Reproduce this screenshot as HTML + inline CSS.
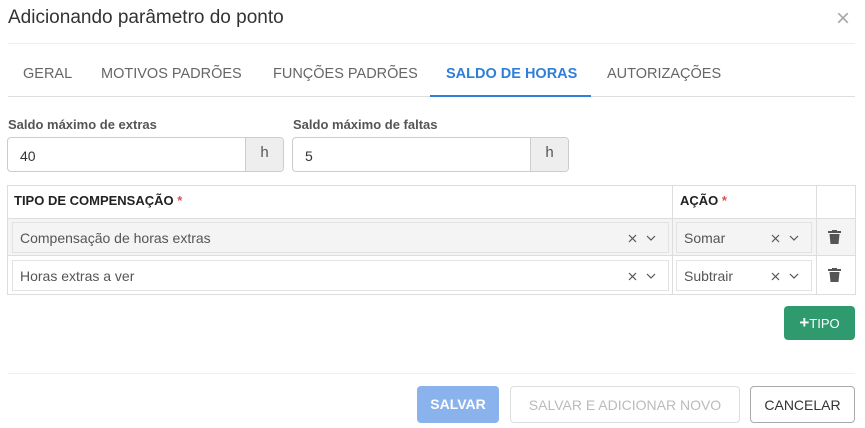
<html><head><style>
body{margin:0;width:865px;height:428px;background:#fff;font-family:"Liberation Sans",sans-serif;color:#333;position:relative;overflow:hidden}
.a{position:absolute}
.tab{position:absolute;top:66px;font-size:14.5px;color:#666}
.lbl{position:absolute;top:117px;font-size:13px;font-weight:bold;color:#555}
.inp{position:absolute;top:137px;height:35px;border:1px solid #ccc;border-radius:4px;box-sizing:border-box;overflow:hidden;font-size:14px}
.inp span{position:absolute;left:12px;top:10px}
.inp .ad{position:absolute;right:0;top:0;bottom:0;width:37px;background:#eee;border-left:1px solid #ccc;text-align:center;line-height:30px;color:#555;font-size:15px}
.sel{position:absolute;height:31px;box-sizing:border-box;border:1px solid #e3e3e3;font-size:14px;color:#555}
.sel span{position:absolute;left:7px;top:7px}
.sel svg{position:absolute;top:11px}
.btn{position:absolute;top:386px;height:37px;box-sizing:border-box;border-radius:4px;font-size:14px;text-align:center;line-height:36px}
</style></head><body>
<div class="a" style="left:8px;top:7px;font-size:19px;color:#333">Adicionando parâmetro do ponto</div>
<div class="a" style="left:836px;top:5px;font-size:24px;color:#aaa">×</div>
<div class="a" style="left:8px;top:43px;width:847px;border-top:1px solid #eee"></div>
<div class="a" style="left:8px;top:96px;width:847px;border-top:1px solid #ddd"></div>
<div class="tab" style="left:23px">GERAL</div>
<div class="tab" style="left:101px">MOTIVOS PADRÕES</div>
<div class="tab" style="left:273px">FUNÇÕES PADRÕES</div>
<div class="tab" style="left:446px;color:#2f7fd8;font-weight:bold">SALDO DE HORAS</div>
<div class="tab" style="left:607px">AUTORIZAÇÕES</div>
<div class="a" style="left:430px;top:95px;width:161px;height:2px;background:#2f7fd8"></div>
<div class="lbl" style="left:8px">Saldo máximo de extras</div>
<div class="lbl" style="left:293px">Saldo máximo de faltas</div>
<div class="inp" style="left:7px;width:277px"><span>40</span><div class="ad">h</div></div>
<div class="inp" style="left:292px;width:277px"><span>5</span><div class="ad">h</div></div>
<div class="a" style="left:7px;top:185px;width:849px;height:110px;border:1px solid #ddd;box-sizing:border-box"></div>
<div class="a" style="left:8px;top:218px;width:847px;height:38px;background:#f4f4f4;border-top:1px solid #ddd;border-bottom:1px solid #ddd;box-sizing:border-box"></div>
<div class="a" style="left:672px;top:185px;height:110px;border-left:1px solid #ddd"></div>
<div class="a" style="left:816px;top:185px;height:110px;border-left:1px solid #ddd"></div>
<div class="a" style="left:14px;top:193px;font-size:13px;font-weight:bold;color:#222">TIPO DE COMPENSAÇÃO <span style="color:#d9534f">*</span></div>
<div class="a" style="left:680px;top:193px;font-size:13px;font-weight:bold;color:#222">AÇÃO <span style="color:#d9534f">*</span></div>

<div class="sel" style="left:12px;top:222px;width:657px"><span>Compensação de horas extras</span>
<svg style="right:31px" width="9" height="9"><path d="M1 1l7 7M8 1l-7 7" stroke="#555" stroke-width="1.2"/></svg>
<svg style="right:12px;top:12px" width="10" height="7"><path d="M1 1l4 4 4-4" stroke="#555" stroke-width="1.2" fill="none"/></svg></div>
<div class="sel" style="left:676px;top:222px;width:136px"><span>Somar</span>
<svg style="right:31px" width="9" height="9"><path d="M1 1l7 7M8 1l-7 7" stroke="#555" stroke-width="1.2"/></svg>
<svg style="right:12px;top:12px" width="10" height="7"><path d="M1 1l4 4 4-4" stroke="#555" stroke-width="1.2" fill="none"/></svg></div>
<div class="sel" style="left:12px;top:260px;width:657px;background:#fff"><span>Horas extras a ver</span>
<svg style="right:31px" width="9" height="9"><path d="M1 1l7 7M8 1l-7 7" stroke="#555" stroke-width="1.2"/></svg>
<svg style="right:12px;top:12px" width="10" height="7"><path d="M1 1l4 4 4-4" stroke="#555" stroke-width="1.2" fill="none"/></svg></div>
<div class="sel" style="left:676px;top:260px;width:136px;background:#fff"><span>Subtrair</span>
<svg style="right:31px" width="9" height="9"><path d="M1 1l7 7M8 1l-7 7" stroke="#555" stroke-width="1.2"/></svg>
<svg style="right:12px;top:12px" width="10" height="7"><path d="M1 1l4 4 4-4" stroke="#555" stroke-width="1.2" fill="none"/></svg></div>

<svg class="a" style="left:828px;top:230px" width="13" height="14" viewBox="0 0 13 14"><rect x="0" y="1" width="13" height="2" fill="#555"/><rect x="4" y="0" width="5" height="2" fill="#555"/><path d="M1.5 4h10l-1 10h-8z" fill="#555"/></svg>
<svg class="a" style="left:828px;top:268px" width="13" height="14" viewBox="0 0 13 14"><rect x="0" y="1" width="13" height="2" fill="#555"/><rect x="4" y="0" width="5" height="2" fill="#555"/><path d="M1.5 4h10l-1 10h-8z" fill="#555"/></svg>
<div class="a" style="left:784px;top:306px;width:71px;height:34px;background:#2e9a6d;border-radius:4px;color:#fff;font-size:13px;line-height:34px;text-align:center"><b style="font-size:17px">+</b>TIPO</div>
<div class="a" style="left:8px;top:373px;width:847px;border-top:1px solid #eee"></div>
<div class="btn" style="left:417px;width:82px;background:#8ab2ec;color:#fff;font-weight:bold">SALVAR</div>
<div class="btn" style="left:510px;width:230px;border:1px solid #ddd;color:#bbb">SALVAR E ADICIONAR NOVO</div>
<div class="btn" style="left:750px;width:105px;border:1px solid #aaa;color:#333">CANCELAR</div>
</body></html>
